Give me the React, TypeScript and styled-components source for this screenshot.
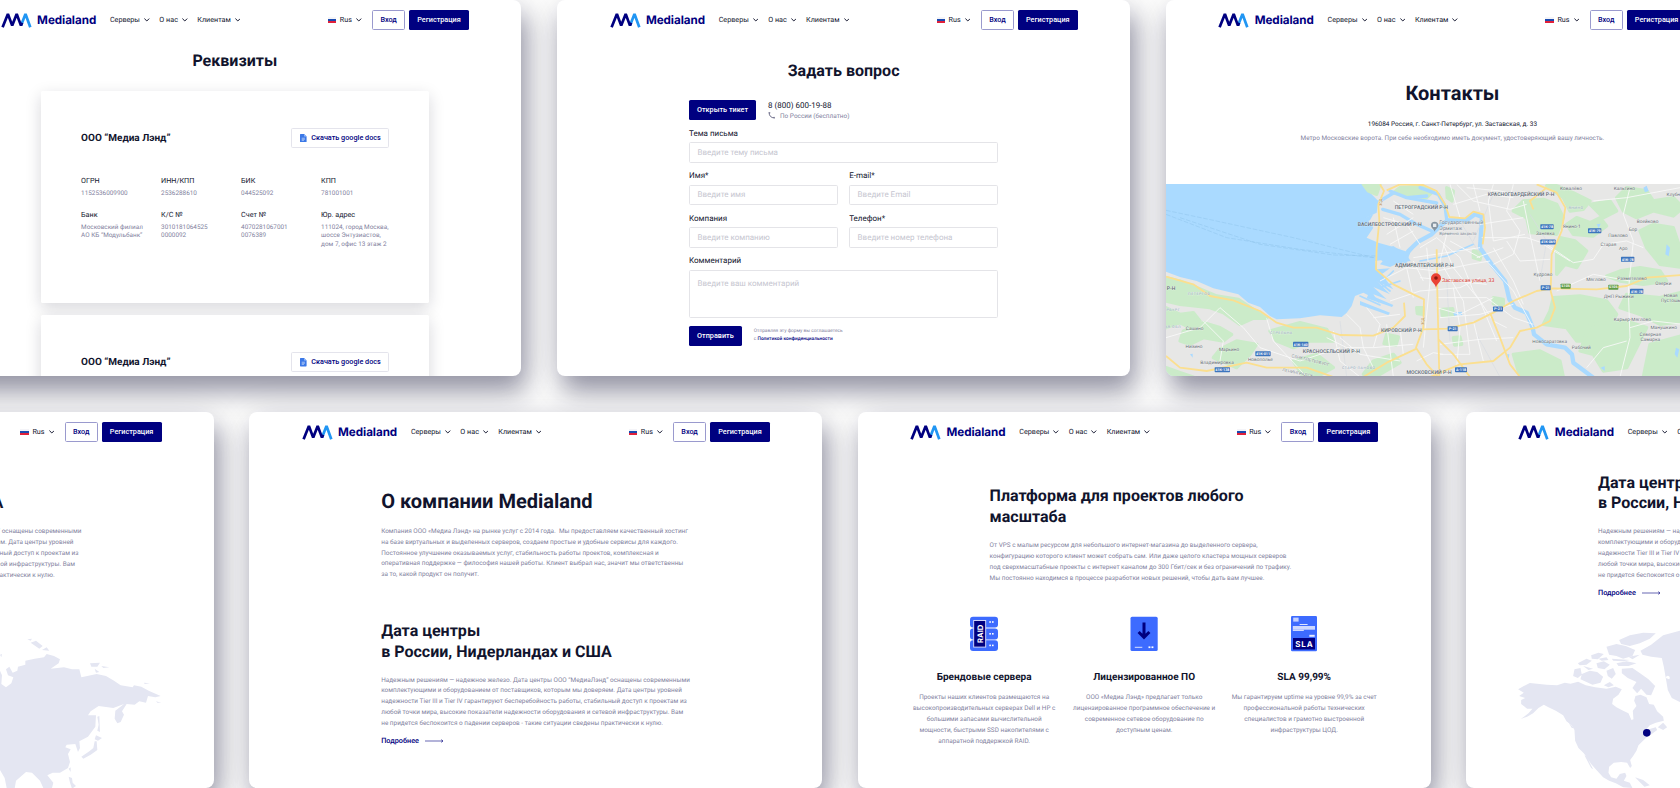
import React from 'react';
import styled, { createGlobalStyle, css } from 'styled-components';

const navy = '#000080';
const ink = '#11142d';
const muted = '#82829e';

const GlobalStyle = createGlobalStyle`
  * { box-sizing: border-box; }
  body {
    margin: 0;
    background: #fff;
    font-family: Roboto, "Noto Sans", sans-serif;
    color: ${ink};
    text-rendering: geometricPrecision;
  }
  h2, p { margin: 0; }
  svg { display: block; flex: none; }
`;

const Board = styled.main`
  width: 1680px;
  height: 788px;
  overflow: hidden;
  display: flex;
  flex-direction: column;
  gap: 36px;
  background: #fefefe;
`;

const Strip = styled.div<{ $shift: number; $gap: number }>`
  display: flex;
  gap: ${(p) => p.$gap}px;
  margin-left: ${(p) => p.$shift}px;
`;

const Card = styled.section`
  flex: none;
  width: 572.8px;
  height: 376px;
  border-radius: 8px;
  background: #fff;
  box-shadow: 5px 15px 26px rgba(18, 18, 54, 0.42), 0 4px 44px rgba(20, 20, 40, 0.09);
`;

const CardBody = styled.div`
  width: 100%;
  height: 376px;
  overflow: hidden;
  border-radius: 8px;
  display: flex;
  flex-direction: column;
`;

/* ---------- header ---------- */

const Header = styled.header`
  flex: none;
  height: 40px;
  padding: 0 52.3px;
  display: flex;
  align-items: center;
`;

const Brand = styled.span`
  margin-left: 5.4px;
  width: 60px;
  font: 700 11.65px/20px Inter, sans-serif;
  letter-spacing: -0.05px;
  color: ${navy};
`;

const Nav = styled.nav`
  margin-left: 12.8px;
  display: flex;
  gap: 9.8px;
`;

const NavItem = styled.span<{ $gap?: number }>`
  display: flex;
  align-items: center;
  gap: ${(p) => p.$gap ?? 4}px;
  font-size: 7.2px;
  line-height: 20px;
  padding-top: 0.5px;
  white-space: nowrap;
`;

const Spacer = styled.div`
  flex: 1;
`;

const Flag = styled.span`
  width: 8.4px;
  height: 5.8px;
  margin-right: -0.4px;
  background: linear-gradient(#f4f4f8 0 33%, #1a4bb0 33% 67%, #e0203a 67%);
`;

const Button = styled.button<{ $variant?: 'solid' | 'outline' | 'soft'; $width: number; $left?: number }>`
  flex: none;
  width: ${(p) => p.$width}px;
  height: 20px;
  margin: 0 0 0 ${(p) => p.$left ?? 0}px;
  padding: 0.4px 0 0;
  display: flex;
  align-items: center;
  justify-content: center;
  gap: 4.5px;
  border-radius: 1.6px;
  font: 500 7.25px/10px Roboto, sans-serif;
  white-space: nowrap;
  ${(p) =>
    p.$variant === 'outline'
      ? css`background: #fff; color: ${navy}; border: 1px solid #9a9ace;`
      : p.$variant === 'soft'
        ? css`background: #fff; color: ${navy}; border: 1px solid #e4e4ec;`
        : css`background: ${navy}; color: #fff; border: 0;`}
`;

const Chevron = () => (
  <svg width="5.6" height="4" viewBox="0 0 5.6 4" fill="none">
    <path d="M0.4 0.6 2.8 3 5.2 0.6" stroke={ink} strokeWidth="1" />
  </svg>
);

const Logo = () => (
  <svg width="31" height="16" viewBox="0 0 31 16" fill="none" strokeWidth="2.7" strokeLinejoin="bevel">
    <path d="M20 13.6 24.5 2 29.3 15.2" stroke="#2196f3" />
    <path d="M1.6 15.2 6.9 2 11.2 13.600 15.700 2 20 13.600 21.100 10.800" stroke={navy} />
  </svg>
);

const SiteHeader = () => (
  <Header>
    <Logo />
    <Brand>Medialand</Brand>
    <Nav>
      {['Серверы', 'О нас', 'Клиентам'].map((t) => (
        <NavItem key={t}>{t}<Chevron /></NavItem>
      ))}
    </Nav>
    <Spacer />
    <NavItem><Flag />Rus<Chevron /></NavItem>
    <Button $variant="outline" $width={33} $left={10.6}>Вход</Button>
    <Button $width={59.8} $left={4}>Регистрация</Button>
  </Header>
);

/* ---------- shared text ---------- */

const Title = styled.h2<{ $size?: number; $line?: number; $top?: number; $center?: boolean }>`
  flex: none;
  margin-top: ${(p) => p.$top ?? 0}px;
  font-weight: 700;
  font-size: ${(p) => p.$size ?? 16.05}px;
  line-height: ${(p) => p.$line ?? 20.8}px;
  text-align: ${(p) => (p.$center ? 'center' : 'left')};
  white-space: nowrap;
`;

const Text = styled.p<{ $top?: number; $center?: boolean }>`
  margin-top: ${(p) => p.$top ?? 0}px;
  font-size: 6.41px;
  line-height: 10.83px;
  color: ${muted};
  text-align: ${(p) => (p.$center ? 'center' : 'left')};
  white-space: pre;
`;

const Column = styled.div`
  width: 309px;
  margin-left: 131.8px;
  display: flex;
  flex-direction: column;
`;

const Link = styled.a<{ $top: number }>`
  margin-top: ${(p) => p.$top}px;
  display: flex;
  align-items: center;
  gap: 6px;
  font-size: 7.3px;
  font-weight: 500;
  line-height: 10px;
  color: ${navy};
`;

const More = ({ top }: { top: number }) => (
  <Link $top={top}>
    Подробнее
    <svg width="18.5" height="4" viewBox="0 0 18.5 4" fill="none" stroke={navy} strokeWidth="0.6">
      <path d="M0 2H18M16.2 0.6 18 2 16.2 3.4" />
    </svg>
  </Link>
);

/* ---------- requisites ---------- */

const Panels = styled.div`
  margin: 20px 0 0 92.7px;
  width: 388.4px;
  display: flex;
  flex-direction: column;
  gap: 12px;
`;

const Panel = styled.div`
  flex: none;
  height: 212.2px;
  padding: 37.5px 40px;
  border-radius: 1.6px;
  background: #fff;
  box-shadow: 0 5px 16px rgba(20, 20, 40, 0.17);
`;

const PanelHead = styled.div`
  height: 20px;
  display: flex;
  align-items: center;
  justify-content: space-between;
  font-weight: 700;
  font-size: 10px;
`;

const Facts = styled.dl`
  margin: 28.1px 0 0;
  display: grid;
  grid-template-columns: repeat(4, 80px);
  row-gap: 11.8px;
  white-space: pre;
`;

const FactName = styled.dt`
  font-size: 7.2px;
  line-height: 10px;
`;

const FactValue = styled.dd`
  margin: 3.4px 0 0;
  font-size: 6.39px;
  line-height: 8.4px;
  color: ${muted};
`;

const facts = [
  ['ОГРН', '1152536009900'],
  ['ИНН/КПП', '2536288610'],
  ['БИК', '044525092'],
  ['КПП', '781001001'],
  ['Банк', 'Московский филиал\nАО КБ “Модульбанк”'],
  ['К/С №', '3010181064525\n0000092'],
  ['Счет №', '4070281067001\n0076389'],
  ['Юр. адрес', '111024, город Москва,\nшоссе Энтузиастов,\nдом 7, офис 13 этаж 2'],
];

const DocIcon = () => (
  <svg width="6.6" height="8.4" viewBox="0 0 6.6 8.4">
    <path d="M.6 0H4.2L6.6 2.4V7.8a.6.6 0 0 1-.6.6H.6A.6.6 0 0 1 0 7.8V.6A.6.6 0 0 1 .6 0Z" fill="#3b78e7" />
    <path d="M4.2 0 6.6 2.4H4.2Z" fill="#a1c2fa" />
    <path d="M1.7 4.2H4.9M1.7 5.3H4.9M1.7 6.4H4" stroke="#e8f0fe" strokeWidth=".55" />
  </svg>
);

const RequisitesPanel = ({ items }: { items?: string[][] }) => (
  <Panel>
    <PanelHead>
      ООО “Медиа Лэнд”
      <Button $variant="soft" $width={98}><DocIcon />Скачать google docs</Button>
    </PanelHead>
    {items && (
      <Facts>
        {items.map(([k, v]) => (
          <div key={k}>
            <FactName>{k}</FactName>
            <FactValue>{v}</FactValue>
          </div>
        ))}
      </Facts>
    )}
  </Panel>
);

const Requisites = () => (
  <Card><CardBody>
    <SiteHeader />
    <Title $center $line={20} $top={10.5}>Реквизиты</Title>
    <Panels>
      <RequisitesPanel items={facts} />
      <RequisitesPanel />
    </Panels>
  </CardBody></Card>
);

/* ---------- question form ---------- */

const FormRow = styled.div<{ $top?: number; $gap?: number }>`
  display: flex;
  align-items: center;
  gap: ${(p) => p.$gap ?? 11.4}px;
  margin-top: ${(p) => p.$top ?? 0}px;
`;

const Phone = styled.div`
  font-size: 8px;
  line-height: 11px;
`;

const PhoneNote = styled.div`
  display: flex;
  align-items: center;
  gap: 5px;
  font-size: 6.45px;
  line-height: 10px;
  color: ${muted};
`;

const Field = styled.label`
  flex: 1;
  display: flex;
  flex-direction: column;
  font-size: 8px;
  line-height: 10px;
`;

const Input = styled.span<{ $tall?: boolean }>`
  height: ${(p) => (p.$tall ? 48.2 : 20.4)}px;
  margin-top: 3.4px;
  padding: ${(p) => (p.$tall ? 8.3 : 4.6)}px 7.4px;
  border: 1px solid #e4e4e8;
  border-radius: 1.6px;
  color: #c6c6d0;
`;

const Consent = styled.p`
  font-size: 4.8px;
  line-height: 8px;
  color: ${muted};
  white-space: pre;
  b { color: ${navy}; font-weight: 500; }
`;

const TextField = ({ label, hint, tall }: { label: string; hint: string; tall?: boolean }) => (
  <Field>{label}<Input $tall={tall}>{hint}</Input></Field>
);

const Question = () => (
  <Card><CardBody>
    <SiteHeader />
    <Title $center $line={20} $top={20.5}>Задать вопрос</Title>
    <Column>
      <FormRow $top={19} $gap={12}>
        <Button $width={67}>Открыть тикет</Button>
        <div>
          <Phone>8 (800) 600-19-88</Phone>
          <PhoneNote>
            <svg width="7" height="7" viewBox="0 0 7 7" fill="none">
              <path d="M1.2.6C1 3.800 3.200 6 6.400 5.800M.6 .8H2.300M6.200 4.900V6.500" stroke="#6c6c88" strokeWidth="1" />
            </svg>
            По России (бесплатно)
          </PhoneNote>
        </div>
      </FormRow>
      <FormRow $top={8.6}><TextField label="Тема письма" hint="Введите тему письма" /></FormRow>
      <FormRow $top={8.6}>
        <TextField label="Имя*" hint="Введите имя" />
        <TextField label="E-mail*" hint="Введите Email" />
      </FormRow>
      <FormRow $top={8.6}>
        <TextField label="Компания" hint="Введите компанию" />
        <TextField label="Телефон*" hint="Введите номер телефона" />
      </FormRow>
      <FormRow $top={8.6}><TextField tall label="Комментарий" hint="Введите ваш комментарий" /></FormRow>
      <FormRow $top={8} $gap={12}>
        <Button $width={52.8}>Отправить</Button>
        <Consent>{'Отправляя эту форму вы соглашаетесь\nс '}<b>Политикой конфиденциальности</b></Consent>
      </FormRow>
    </Column>
  </CardBody></Card>
);

/* ---------- contacts ---------- */

const Address = styled.p`
  margin-top: 13.7px;
  font-size: 6.45px;
  line-height: 12px;
  text-align: center;
`;

const MapFrame = styled.div`
  margin-top: 40.2px;
`;

type Label = [number, number, string];

const districts: Label[] = [
  [784, 84, 'ПЕТРОГРАДСКИЙ Р-Н'], [689, 136, 'ВАСИЛЕОСТРОВСКИЙ Р-Н'], [793, 257, 'АДМИРАЛТЕЙСКИЙ Р-Н'],
  [1083, 46, 'КРАСНОГВАРДЕЙСКИЙ Р-Н'], [724, 453, 'КИРОВСКИЙ Р-Н'], [514, 515, 'КРАСНОСЕЛЬСКИЙ Р-Н'],
  [807, 579, 'МОСКОВСКИЙ Р-Н'], [33, 328, 'Р-Н'],
];
const towns: Label[] = [
  [1233, 28, 'Ковалёво'], [1393, 28, 'Кальтино'], [1540, 45, 'Клубн'], [1463, 125, 'Воейково'], [1235, 140, 'Янино-1'],
  [1419, 150, 'Бор'], [1374, 169, 'Павлово'], [1345, 196, 'Старая'], [1390, 208, 'Аро'], [1156, 163, 'Заневка'],
  [1149, 285, 'Кудрово'], [1308, 301, 'Мяглово'], [1416, 296, 'Разметелево'], [1510, 311, 'Озерки'], [1376, 351, 'ДНП Рыжики'],
  [1532, 348, 'Новая'], [1532, 364, 'Пустошь'], [1417, 419, 'Карьер-Мяглово'], [1511, 443, 'Манушкино'],
  [1471, 464, 'Северная'], [1471, 480, 'Самарка'], [1169, 485, 'Новосаратовка'], [1264, 503, 'Рабочий'],
  [104, 447, 'Сашино'], [102, 501, 'Низино'], [207, 509, 'Марьино'], [171, 549, 'Владимировка'], [301, 540, 'Новополье'],
];
const faint: Label[] = [
  [118, 342, 'ПЕТЕРГОФ'], [364, 458, 'СТРЕЛЬНА'], [596, 564, 'СТАРО-ПАНОВО'], [1248, 84, 'ЯНИНО'], [40, 390, 'РБУРГ'], [39, 442, 'АЯ ОБЛ'],
];
const shields: Label[] = [
  [1161, 137, '41К-78'], [1304, 149, '41К-79'], [1164, 183, '41К-069'], [1403, 235, '41К-78'], [1430, 331, '41К-78'],
  [1157, 320, 'Р-21'], [1014, 384, 'Р-21'], [878, 443, 'Р-21'], [422, 490, '41К-140'], [309, 518, '41К-011'],
  [187, 566, '41К-138'], [903, 566, 'А-118'],
];
const parks = [
  'M18 290 60 300 110 320 170 345 235 355 280 385 320 412 280 412 240 430 190 395 150 380 60 370 18 360Z',
  'M18 380 60 400 100 395 120 420 90 440 60 425 18 440Z',
  'M70 450 130 425 180 440 215 460 190 480 130 470 90 490 60 480Z',
  'M330 450 420 425 500 445 520 480 450 480 400 500 350 480Z',
  'M230 480 290 490 270 520 230 560 160 530 180 505Z',
  'M18 560 60 575 100 588H18Z',
  'M400 540 470 520 520 560 470 588H430Z',
  'M610 10H660L650 40 625 30Z',
  'M720 20 780 16 820 30 800 50 740 44 700 36Z',
  'M1090 60 1150 55 1190 70 1210 110 1190 160 1110 155 1100 110 1060 90Z',
  'M1180 10 1240 35 1290 60 1270 85 1230 90 1210 50 1160 14Z',
  'M1250 110 1290 125 1320 110 1340 135 1300 165 1240 160 1220 130Z',
  'M1200 170 1245 180 1280 210 1250 260 1215 250 1190 280 1190 200Z',
  'M1400 20 1460 30 1480 60 1540 50 1570 80 1540 105 1480 90 1430 110 1390 90 1370 50Z',
  'M1290 70 1350 60 1370 90 1330 110Z',
  'M1480 130 1540 140 1560 200 1570 260 1500 250 1460 200 1440 150Z',
  'M1440 260 1500 270 1520 300 1450 310 1380 300 1340 285 1380 270Z',
  'M1180 350 1260 345 1340 360 1370 400 1340 450 1300 480 1250 480 1220 440 1150 430 1170 390Z',
  'M1290 430 1400 420 1460 440 1430 500 1400 560 1330 570 1300 520 1260 510Z',
  'M1400 340 1500 350 1580 330 1580 420 1500 430 1440 400 1380 380Z',
  'M1470 490 1580 460V588H1450Z',
  'M1060 520 1140 510 1200 540 1210 588H1080Z',
  'M640 540 700 520 720 545 660 580 610 580Z',
  'M680 460 715 468 708 492 672 488Z',
  'M845 385 878 383 880 404 847 404Z',
  'M770 380 790 380 790 400 772 398Z',
  'M1000 350 1030 355 1030 372 1000 368Z',
  'M880 470 900 468 905 490 884 492Z',
  'M940 210 965 215 960 236 940 230Z',
  'M860 20 880 30 876 60 862 50Z',
];
const minorRoads = [
  'M870 10 900 110M890 10 940 60 1050 85 1100 70M940 10 960 90M1000 10 985 60 1000 180 1095 160',
  'M1060 10 1040 90 1080 150 1060 220 1000 250M920 20 1020 30 1090 45M880 70 980 40 1060 50',
  'M960 130 1090 110M965 170 1100 170 1160 190 1240 245 1300 235 1330 190 1400 180 1450 200',
  'M700 60 760 100M670 110 740 130 780 190M680 160 760 110M690 190 760 150M720 200 700 110',
  'M660 300 740 260 830 270 930 250 990 240M690 360 780 330 900 320 960 290M740 260 760 350',
  'M800 200 810 300 800 400 790 500M850 190 880 260 960 360 1010 480M780 200 830 170 900 230 940 330 1000 420 1040 440',
  'M870 180 960 230M760 230 960 200M780 290 980 310M760 240 790 300M860 160 840 240 910 360 930 520 840 520',
  'M830 350 980 350 1060 410 1120 430M830 380 900 400 1000 350M840 410 960 400 1060 370',
  'M840 490 960 475 1060 470M850 520 820 515 770 540M880 320 900 440 890 560M940 420 970 540',
  'M560 400 600 440 610 500 640 560M620 380 660 430 640 500 560 500 500 470M520 450 540 540 600 588',
  'M640 410 720 400M640 500 760 490M680 430 700 588M720 440 730 520M540 470 600 520 720 540',
  'M18 470 120 440 180 380 250 440 300 500 420 540 540 500M130 420 190 480 180 540M320 412 340 480 440 588',
  'M1410 20 1390 100 1420 180 1405 330 1410 470 1380 588M1300 60 1400 50 1560 20M1230 240 1150 190',
  'M1190 330 1300 280 1410 300M1410 440 1480 420 1570 430M1400 480 1330 500 1280 560M1120 440 1060 330 980 240',
  'M1040 180 1080 240 1170 235M1000 200 1060 300 1090 370M1090 60 1110 160 1140 300M950 230 1030 200',
];
const highways = [
  'M18 287 100 310 150 345 220 358 300 390 350 425 400 440 470 440 540 462 640 464 700 440 735 405 732 365',
  'M660 10 672 30 655 70 658 120 650 200 648 265 700 310 760 340 792 355 790 440 768 500 800 550 835 588',
  'M680 28 720 10 790 12 830 30 855 70 868 108 915 112 940 92 970 100 975 140 968 190',
  'M18 525 60 560 140 570 260 545 320 560 440 560 520 588M610 588 680 545 770 503',
  'M830 205 832 330 838 588M790 445 860 443 940 425 1000 395 1060 360 1130 330 1180 322 1310 325 1400 315 1460 290 1565 282',
  'M1130 10 1190 35 1216 80 1205 150 1175 220 1172 330 1185 380 1170 420 1130 440 1080 450 1050 500 1000 540 900 550 810 588',
  'M835 475 880 520 930 588M992 400 1020 470 1050 550 1080 588M1160 20 1110 60 1120 85',
];

const CityMap = () => (
  <svg width="572.8" height="192.8" viewBox="18 9 1718.4 578.4" fontFamily="Roboto, sans-serif">
    <rect x="18" y="9" width="1720" height="580" fill="#aadaff" />
    <g fill="none" stroke="#8fc4ea" strokeWidth="1.5" strokeDasharray="14 5">
      <path d="M18 88 160 118 400 170 650 232M18 100 200 170 420 205 640 230M60 110 300 190 520 222 650 225" />
    </g>
    <path fill="#e7e7e6" d="M18 272 60 288 110 300 160 322 235 340 265 365 300 378 330 405 350 415 420 412 480 403 545 408 560 395 575 375 585 345 610 335 640 350 660 370 640 340 680 355 640 318 690 340 650 300 700 325 665 280 690 262 650 265 645 240 672 236 660 250 690 258 740 235 750 215 690 195 655 185 620 170 640 140 618 110 650 95 655 60 615 20 612 9H1738V588H18Z" />
    {parks.map((d) => <path key={d} d={d} fill="#cbebc9" stroke="#cbebc9" strokeWidth="10" strokeLinejoin="round" />)}
    <g fill="#aadaff">
      <path d="M660 210 700 195 740 222 752 240 720 245 665 240Z" />
      <path d="M590 120 640 100 630 118 600 130ZM600 360 690 395 685 402 600 372ZM625 340 700 372 696 378 620 352Z" />
      <path d="M1450 20 1460 14 1466 30 1455 34ZM1520 190 1530 200 1526 226 1516 220ZM1322 560 1334 555 1334 570ZM90 520 98 518 98 530ZM880 395 905 392 907 402 882 404ZM1040 520 1048 520 1046 534ZM1548 500 1558 505 1552 530 1544 520ZM1310 130 1322 128 1316 142Z" />
    </g>
    <g fill="none" stroke="#aadaff" strokeLinejoin="round" strokeLinecap="round">
      <path strokeWidth="13" d="M735 240 745 210 775 182 815 160 835 140 862 118 920 118 945 100 966 108 960 200 995 250 1035 300 1048 355 1065 380 1100 395 1118 440 1122 460 1160 490 1215 500 1236 520 1240 545 1300 590" />
      <path strokeWidth="10" d="M668 85 720 100 770 130 815 150M690 30 740 50 800 45M780 20 835 40 855 75 860 115M700 36 660 60M740 50 830 66" />
      <path strokeWidth="5" d="M640 290 690 330M670 300 700 270M660 320 720 300M600 345 660 372M780 240 860 225 940 190M760 200 720 250" />
    </g>
    <g fill="none" stroke="#d8dde2" strokeWidth="2">
      <path d="M900 120 960 220M1110 100 1160 180 1140 300M860 290 870 480M540 420 560 588M950 460 1020 588M1000 40 940 180" />
    </g>
    {minorRoads.map((d) => <path key={d} d={d} fill="none" stroke="#f9f9f9" strokeWidth="2.6" strokeLinejoin="round" />)}
    {highways.map((d) => <path key={d} d={d} fill="none" stroke="#fbdf8f" strokeWidth="5.4" strokeLinejoin="round" />)}
    <g textAnchor="middle" stroke="#fff" strokeWidth="2" paintOrder="stroke" strokeOpacity=".5">
      <g fontSize="15.4" fill="#5b6874" fontWeight="500">{districts.map(([x, y, t]) => <text key={t} x={x} y={y}>{t}</text>)}</g>
      <g fontSize="14.3" fill="#666d74">{towns.map(([x, y, t]) => <text key={t} x={x} y={y}>{t}</text>)}</g>
      <g fontSize="11" fill="#8aa0b4" letterSpacing="1.5">{faint.map(([x, y, t]) => <text key={t} x={x} y={y}>{t}</text>)}</g>
      <g fontSize="13" fill="#8c939a">
        <text transform="translate(450 542) rotate(14)">САНКТ-ПЕТЕРБУРГ</text>
        <text transform="translate(412 580) rotate(12)">ЛЕНИНГРАДСК</text>
      </g>
      <g fontSize="11" fill="#a9752c">
        <text transform="translate(665 64) rotate(-90)">ЗСД</text>
        <text transform="translate(793 421) rotate(-90)">ЗСД</text>
      </g>
    </g>
    <g textAnchor="middle" fontSize="11" fontWeight="700" fill="#fff">
      {shields.map(([x, y, t]) => {
        const w = t.length > 6 ? 46 : t.length > 5 ? 40 : t.length > 4 ? 36 : 30;
        return <g key={`${x}-${y}`}><rect x={x - w / 2} y={y - 7.5} width={w} height="15" rx="2" fill="#3c74bd" /><text x={x} y={y + 4}>{t}</text></g>;
      })}
      <rect x="1202" y="308" width="30" height="15" rx="2" fill="#5f9a45" /><text x="1217" y="319.5">Е105</text>
      <rect x="1345" y="311" width="30" height="15" rx="2" fill="#5f9a45" /><text x="1360" y="322.5">Е105</text>
    </g>
    <g fill="#76838f" fontSize="15.8" stroke="#fff" strokeWidth="2" strokeOpacity=".5" paintOrder="stroke">
      <text x="838" y="129">Государственный</text>
      <text x="838" y="147">Эрмитаж</text>
      <text x="838" y="162" fontSize="12.5">Временно закрыто</text>
      <text x="846" y="303" fill="#d3352b">Заставская улица, 33</text>
    </g>
    <path d="M824 152C821 143 813 142 813 133a11 11 0 0 1 22 0C835 142 827 143 824 152Z" fill="#8795a1" />
    <rect x="819" y="128" width="10" height="10" fill="#e7ebee" />
    <path d="M828 320C825 305 813 304 813 291.5a15 15 0 0 1 30 0C843 304 831 305 828 320Z" fill="#ea4335" />
    <circle cx="828" cy="291" r="5.5" fill="#8c1710" />
  </svg>
);

const Contacts = () => (
  <Card><CardBody>
    <SiteHeader />
    <Title $center $size={20} $line={24} $top={40.7}>Контакты</Title>
    <Address>196084 Россия, г. Санкт-Петербург, ул. Заставская, д. 33</Address>
    <Text $center $top={2.6}>Метро Московские ворота. При себе необходимо иметь документ, удостоверяющий вашу личность.</Text>
    <MapFrame><CityMap /></MapFrame>
  </CardBody></Card>
);

/* ---------- data centres ---------- */

const datacenterText = `Надежным решениям — надежное железо. Дата центры ООО “МедиаЛэнд” оснащены современными
комплектующими и оборудованием от поставщиков, которым мы доверяем. Дата центры уровней
надежности Tier III и Tier IV гарантируют бесперебойность работы, стабильный доступ к проектам из
любой точки мира, высокие показатели надежности оборудования и сетевой инфраструктуры. Вам
не придется беспокоится о падении серверов - такие ситуации сведены практически к нулю.`;

const WorldMap = () => (
  <svg width="572.8" height="161" viewBox="0 0 572.8 161" fill="#e4e6f2">
    <g transform="translate(-16.2 -227) scale(.33333)">
      <path d="M205 868 222 858 240 849 262 851 290 854 322 856 345 848 362 851 385 845 408 856 436 862 470 866 498 860 516 868 506 884 490 896 487 912 500 922 520 932 536 940 545 960 551 958 549 932 560 918 553 902 557 888 572 884 590 892 598 912 612 914 622 934 640 950 642 962 618 968 600 976 588 990 602 986 618 982 622 990 606 1002 592 1010 582 1020 566 1036 560 1052 550 1068 541 1080 546 1098 541 1104 532 1088 514 1086 492 1088 478 1100 476 1118 484 1132 500 1136 510 1122 526 1118 530 1128 522 1142 540 1148 548 1164 520 1162 498 1150 478 1142 460 1132 440 1110 424 1092 412 1074 402 1060 386 1044 376 1022 374 990 366 976 350 964 340 946 318 932 296 922 282 914 266 924 250 940 232 950 213 957 236 940 248 926 232 926 214 912 214 900 226 894 208 888 222 878Z" />
      <path d="M404 1066 424 1104 430 1108 420 1088 412 1070ZM374 808 392 804 396 824 384 834 370 828ZM396 822 420 812 442 816 460 830 452 848 428 854 410 846 392 838ZM384 790 410 776 426 782 410 794 390 796ZM424 766 446 758 462 762 444 778 426 776ZM440 790 462 784 480 794 464 808 444 804ZM470 740 500 732 528 738 556 750 548 768 520 776 500 768 478 764ZM508 720 540 706 580 698 618 700 600 716 570 730 540 738 514 732ZM470 812 490 804 498 822 486 836 474 828ZM516 806 548 804 574 822 596 838 616 858 604 886 590 884 574 866 562 880 548 864 560 846 534 834 516 820ZM500 790 530 784 560 790 536 798 506 798ZM624 982 640 968 652 982 640 990ZM354 964 372 984 366 984ZM556 1132 580 1140 600 1156 584 1160 566 1142Z" />
      <path d="M400 798 430 806 416 810ZM486 776 540 780 520 784 490 782ZM462 856 480 846 492 856 476 862ZM446 776 470 772 476 780 456 782ZM536 770 570 764 548 778Z" />
      <path d="M572 752 604 734 640 706 690 692 760 696 800 720 790 790 750 840 720 870 690 906 666 894 654 870 650 846 642 800 636 774 604 770 578 764Z" />
      <path d="M648 834a6 6 0 1 1 10 4Z" fill="#fff" />
      <circle cx="591" cy="998.5" r="11.5" fill={navy} />
    </g>
    <g transform="translate(359 -227) scale(.33333)">
      <path d="M-360 880 -200 800 -60 790 0 812 6 826 4 852 18 862 34 850 40 832 24 826 18 808 28 800 38 818 52 812 54 800 76 794 76 782 104 776 132 772 140 762 162 768 180 778 176 790 152 806 192 802 216 808 238 808 244 832 262 828 290 822 318 828 342 842 362 856 398 862 402 856 424 860 446 872 482 888 466 892 444 888 438 908 418 904 404 914 380 912 366 934 372 944 362 966 352 970 344 956 346 932 372 912 340 924 296 918 272 934 264 946 288 946 286 980 264 1010 238 1024 240 1044 234 1056 226 1032 200 1034 196 1042 212 1048 204 1062 210 1086 204 1104 180 1118 158 1118 142 1126 160 1148 156 1164 130 1164 120 1142 96 1118 78 1116 48 1142 44 1166 20 1164 14 1134 0 1110 -60 1080 -200 1090 -360 1040Z" />
      <path d="M82 718 96 716 92 722ZM92 728 108 722 128 738 118 746ZM126 750 140 742 148 752ZM270 790 300 788 292 800 274 800ZM284 806 298 816 288 818ZM304 798 328 802 310 804ZM432 848 450 850 434 852ZM468 904 484 908 472 908ZM292 950 298 948 300 996 292 992 296 974ZM288 1006 306 1014 294 1022 284 1018ZM290 1024 292 1050 272 1064 250 1076 244 1070 268 1054 280 1044 284 1024ZM0 764 6 762 4 772ZM206 1106 212 1102 212 1116ZM206 1130 216 1134 218 1148 228 1158 216 1166 210 1148Z" />
    </g>
  </svg>
);

const MapSlot = styled.div`
  margin-top: 29.2px;
`;

const DataCenters = () => (
  <Card><CardBody>
    <SiteHeader />
    <Column>
      <Title $top={20.6}>Дата центры<br />в России, Нидерландах и США</Title>
      <Text $top={12.2}>{datacenterText}</Text>
      <More top={7.7} />
    </Column>
    <MapSlot><WorldMap /></MapSlot>
  </CardBody></Card>
);

/* ---------- about ---------- */

const About = () => (
  <Card><CardBody>
    <SiteHeader />
    <Column>
      <Title $size={20.05} $line={24} $top={37}>О компании Medialand</Title>
      <Text $top={13}>{`Компания ООО «Медиа Лэнд» на рынке услуг с 2014 года.  Мы предоставляем качественный хостинг
на базе виртуальных и выделенных серверов, создаем простые и удобные сервисы для каждого.
Постоянное улучшение оказываемых услуг, стабильность работы проектов, комплексная и
оперативная поддержке — философия нашей работы. Клиент выбрал нас, значит мы ответственны
за то, какой продукт он получит.`}</Text>
      <Title $top={40.6}>Дата центры<br />в России, Нидерландах и США</Title>
      <Text $top={12.2}>{datacenterText}</Text>
      <More top={7.7} />
    </Column>
  </CardBody></Card>
);

/* ---------- platform ---------- */

const Features = styled.div`
  margin: 32.6px auto 0;
  display: grid;
  grid-template-columns: repeat(3, 160px);
`;

const Feature = styled.div`
  display: flex;
  flex-direction: column;
  align-items: center;
`;

const RaidIcon = () => (
  <svg width="28" height="36" viewBox="0 0 28 36">
    {[0.8, 12.6, 24.2].map((y) => (
      <g key={y}>
        <rect x="0" y={y} width="28" height="10.8" rx="3" fill="#3d6bff" />
        <rect x="19.3" y={y + 4.4} width="1.6" height="1.6" fill="#fff" />
        <rect x="22" y={y + 4.4} width="1.6" height="1.6" fill="#fff" />
      </g>
    ))}
    <rect x="3.7" y="4.5" width="12" height="26.6" fill={navy} stroke="#dfe4ff" strokeWidth="0.9" />
    <text transform="translate(12.5 17.8) rotate(-90)" textAnchor="middle" fill="#fff" fontFamily="Inter, sans-serif" fontWeight="700" fontSize="7.6">RAID</text>
  </svg>
);

const DownloadIcon = () => (
  <svg width="28" height="36" viewBox="0 0 28 36">
    <rect x="0.5" y="0.8" width="27.2" height="34.2" rx="1.6" fill="#3d6bff" />
    <path d="M14 6.5V20.5M8.6 16 14 21.4 19.4 16" fill="none" stroke={navy} strokeWidth="3" />
    <path d="M4.8 31.3H12.3" stroke="#fff" strokeWidth="0.8" />
    <rect x="18.5" y="30.4" width="1.9" height="1.7" fill="#fff" /><rect x="21.5" y="30.4" width="1.9" height="1.7" fill="#fff" />
  </svg>
);

const SlaIcon = () => (
  <svg width="28" height="36" viewBox="0 0 28 36">
    <rect x="1" y="0" width="26" height="35.3" rx="1.2" fill="#3d6bff" />
    <rect x="3.2" y="1.6" width="5.4" height="4" fill="#c3d0ff" />
    <rect x="9.6" y="8" width="8" height="1" fill="#dfe6ff" />
    <rect x="2.8" y="10" width="22.2" height="3.7" fill="#cdd8ff" />
    <rect x="2.8" y="13.7" width="11" height="1.2" fill="#dfe6ff" />
    <rect x="19.3" y="18.8" width="5.4" height="2" fill="#e6ebff" />
    <rect x="3" y="22" width="22" height="11.5" fill={navy} />
    <text x="14.4" y="30.7" textAnchor="middle" fill="#fff" fontFamily="Inter, sans-serif" fontWeight="700" fontSize="8" letterSpacing=".8">SLA</text>
  </svg>
);

const features = [
  { icon: <RaidIcon />, title: 'Брендовые сервера', text: 'Проекты наших клиентов размещаются на\nвысокопроизводительных серверах Dell и HP с\nбольшими запасами вычислительной\nмощности, быстрыми SSD накопителями с\nаппаратной поддержкой RAID.' },
  { icon: <DownloadIcon />, title: 'Лицензированное ПО', text: 'ООО «Медиа Лэнд» предлагает только\nлицензированное программное обеспечение и\nсовременное сетевое оборудование по\nдоступным ценам.' },
  { icon: <SlaIcon />, title: 'SLA 99,99%', text: 'Мы гарантируем uptime на уровне 99,9% за счет\nпрофессиональной работы технических\nспециалистов и грамотно выстроенной\nинфраструктуры ЦОД.' },
];

const Platform = () => (
  <Card><CardBody>
    <SiteHeader />
    <Column>
      <Title $top={34}>Платформа для проектов любого<br />масштаба</Title>
      <Text $top={12.5}>{`От VPS с малым ресурсом для небольшого интернет-магазина до выделенного сервера,
конфигурацию которого клиент может собрать сам. Или даже целого кластера мощных серверов
под сверхмасштабные проекты с интернет каналом до 300 Гбит/сек и без ограничений по трафику.
Мы постоянно находимся в процессе разработки новых решений, чтобы дать вам лучшее.`}</Text>
    </Column>
    <Features>
      {features.map((f) => (
        <Feature key={f.title}>
          {f.icon}
          <Title $center $size={10} $line={12} $top={20}>{f.title}</Title>
          <Text $center $top={8.3}>{f.text}</Text>
        </Feature>
      ))}
    </Features>
  </CardBody></Card>
);

export default function App() {
  return (
    <>
      <GlobalStyle />
      <Board>
        <Strip $shift={-51.6} $gap={36}>
          <Requisites />
          <Question />
          <Contacts />
        </Strip>
        <Strip $shift={-359} $gap={35.6}>
          <DataCenters />
          <About />
          <Platform />
          <DataCenters />
        </Strip>
      </Board>
    </>
  );
}
